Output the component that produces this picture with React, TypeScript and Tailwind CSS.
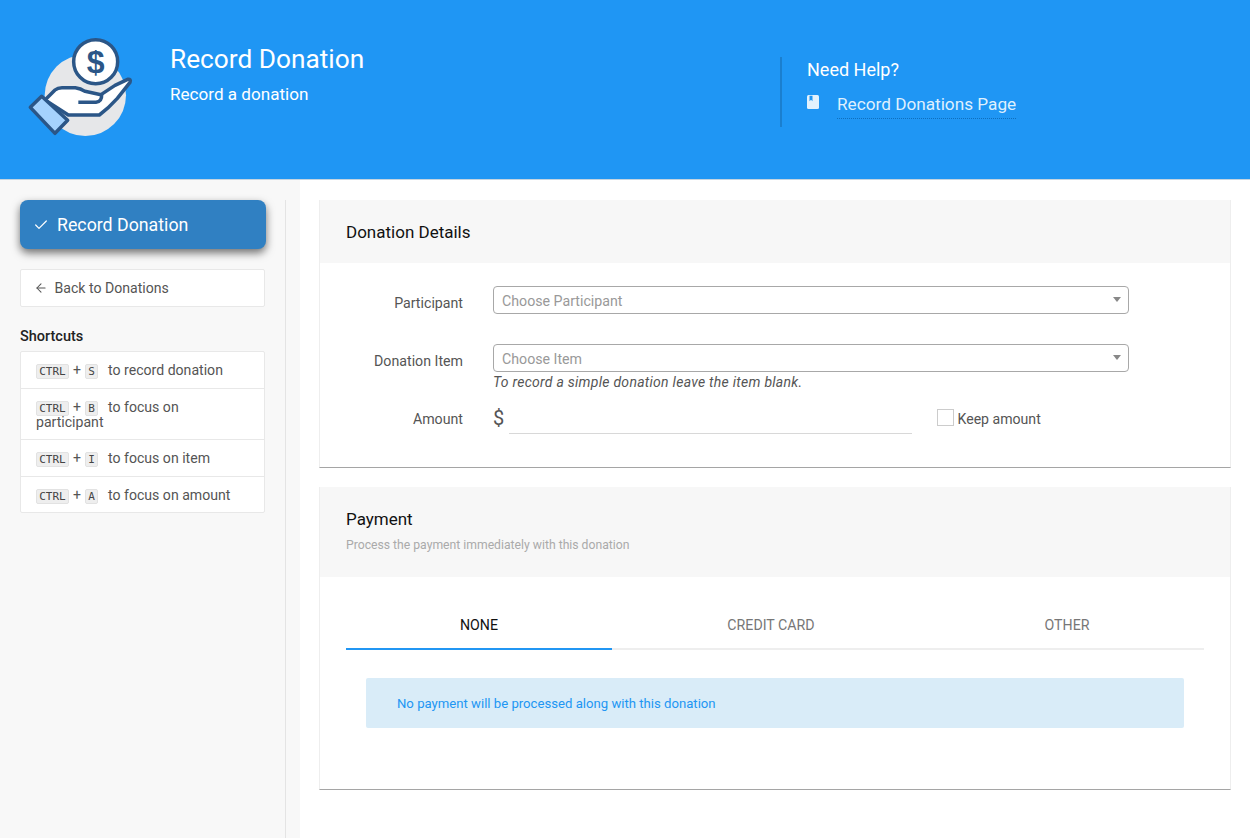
import React from "react";
import { ArrowLeft, Check } from "lucide-react";

function Logo() {
  return (
    <svg viewBox="0 0 480 390" className="w-[160px] h-[130px] mt-[20px] shrink-0">
      <circle cx="256" cy="226" r="122" fill="#e6e7e9" />
      <path d="M135 240 L165 210 Q173 203 186 203 L226 203 Q242 205 255 214 L303 224 L345 196 L383 178 Q394 177 390 187 L352 235 Q325 265 298 285 L205 285 Z" fill="#fff" stroke="#2b5687" strokeWidth="10.5" strokeLinejoin="round" />
      <path d="M235 247 L288 247 Q306 245 305 224" fill="none" stroke="#2b5687" strokeWidth="10.5" />
      <path d="M125 229 L203 301 L165 340 L91 262 Z" fill="#a5d2fd" stroke="#2b5687" strokeWidth="10.5" strokeLinejoin="round" />
      <circle cx="287" cy="125" r="66" fill="#fff" stroke="#2b5687" strokeWidth="10.5" />
      <text x="287" y="158" textAnchor="middle" fontFamily="Liberation Sans, sans-serif" fontWeight="700" fontSize="96" fill="#2b5687">$</text>
    </svg>
  );
}

function Key({ children, w }: { children: React.ReactNode; w: string }) {
  return (
    <kbd className={`inline-block ${w} h-[15px] leading-[14px] text-center bg-[#eeeeee] border border-[#e2e2e2] rounded-[2px] text-[11px] text-[#444] font-['DejaVu_Sans_Mono',monospace]`}>
      {children}
    </kbd>
  );
}

function Shortcut({ k, text, last, pb = "pb-[9px]" }: { k: string; text: React.ReactNode; last?: boolean; pb?: string }) {
  return (
    <div className={`px-[15px] pt-[11px] ${pb} text-[14.1px] leading-[15px] text-[#555] ${last ? "" : "border-b border-[#e8e8e8]"}`}>
      <Key w="w-[33px]">CTRL</Key>
      <span className="mx-[4px] text-[#555]">+</span>
      <Key w="w-[13px]">{k}</Key>
      <span className="ml-[10px]">{text}</span>
    </div>
  );
}

function Select({ text }: { text: string }) {
  return (
    <div className="h-[28px] w-[636px] border border-[#a8a8a8] rounded-[4px] bg-white flex items-center justify-between pl-[8px] pr-[6px] text-[14.2px] text-[#999]">
      <span className="mt-[3px]">{text}</span>
      <span className="w-0 h-0 border-l-[4px] border-r-[4px] border-t-[5px] border-l-transparent border-r-transparent border-t-[#888] mr-[1px] -mt-[2px]" />
    </div>
  );
}

export default function App() {
  return (
    <div className="w-[1250px] h-[838px] overflow-hidden bg-white font-['Roboto',sans-serif] flex flex-col">
      <header className="h-[180px] shrink-0 bg-[#1f96f4] border-b border-[#c4d4e0] flex text-white">
        <Logo />
        <div className="ml-[10px] pt-[42px] w-[610px]">
          <div className="text-[26.25px] leading-[34px]">Record Donation</div>
          <div className="text-[17.1px] leading-[20px] mt-[8px]">Record a donation</div>
        </div>
        <div className="mt-[57px] h-[70px] border-l-2 border-[#1a7fcf] pl-[25px]">
          <div className="text-[18px] leading-[24px] mt-[1px]">Need Help?</div>
          <div className="flex mt-[10px]">
            <svg viewBox="0 0 12 14" className="w-[12px] h-[14px] mt-[3px] mr-[18px]">
              <path d="M1.5 0H10.5Q12 0 12 1.5V12.5Q12 14 10.5 14H1.5Q0 14 0 12.5V1.5Q0 0 1.5 0Z" fill="#e3f2fd" />
              <path d="M2.5 0.8H5.5V6.2L4 4.8L2.5 6.2Z" fill="#1f96f4" />
            </svg>
            <span className="text-[17.2px] leading-[24px] pb-[2px] text-[#dff0fe] border-b border-dotted border-[#0f6fbd]">Record Donations Page</span>
          </div>
        </div>
      </header>
      <div className="flex flex-1 min-h-0">
        <aside className="w-[300px] shrink-0 bg-[#f8f8f8] pl-[20px] pr-[14px] pt-[20px]">
          <div className="h-full border-r border-[#e4e4e4] pr-[20px]">
            <div className="h-[49px] bg-[#3080c2] rounded-[8px] -mr-[1px] shadow-[0_4px_8px_rgba(0,0,0,0.55)] flex items-center pl-[13px] pt-[1px] text-white text-[17.75px]">
              <Check size={16} strokeWidth={1.8} className="mr-[8px]" />
              Record Donation
            </div>
            <div className="mt-[20px] h-[38px] bg-white border border-[#e8e8e8] rounded-[2px] flex items-center pl-[13px] pt-[1px] text-[14.1px] text-[#555]">
              <ArrowLeft size={14} strokeWidth={1.8} className="mr-[6.5px] -mt-[2px]" />
              Back to Donations
            </div>
            <div className="mt-[21px] text-[14.5px] leading-[18px] font-medium text-[#222]">Shortcuts</div>
            <div className="mt-[5px] bg-white border border-[#e8e8e8] rounded-[2px]">
              <Shortcut k="S" text="to record donation" />
              <Shortcut k="B" pb="pb-[8px]" text={<>to focus on<br /><span className="relative -top-[1px]">participant</span></>} />
              <Shortcut k="I" text="to focus on item" />
              <Shortcut k="A" pb="pb-[8px]" text="to focus on amount" last />
            </div>
          </div>
        </aside>
        <main className="flex-1 pl-[19px] pr-[19px] pt-[20px]">
          <section className="bg-white border-l border-r border-[#eeeeee] border-b border-b-[#a5a5a5] h-[268px]">
            <div className="h-[63px] bg-[#f7f7f7] pl-[26px] pt-[2px] flex items-center text-[17px] text-[#111]">Donation Details</div>
            <div className="flex items-start mt-[23px]">
              <label className="w-[144px] text-right text-[14.2px] text-[#555] mt-[7px] pr-[1px]">Participant</label>
              <div className="ml-[29px]"><Select text="Choose Participant" /></div>
            </div>
            <div className="flex items-start mt-[30px]">
              <label className="w-[144px] text-right text-[14.2px] text-[#555] mt-[7px] pr-[1px]">Donation Item</label>
              <div className="ml-[29px]">
                <Select text="Choose Item" />
                <div className="text-[14px] leading-[18px] tracking-[0.27px] pt-[1px] italic text-[#555]">To record a simple donation leave the item blank.</div>
              </div>
            </div>
            <div className="flex items-start mt-[4px]">
              <label className="w-[144px] text-right text-[14.2px] text-[#555] mt-[14px] pr-[1px]">Amount</label>
              <div className="ml-[29px] text-[20px] leading-[28px] text-[#555] w-[16px] mt-[9px]">$</div>
              <div className="w-[403px] h-[39px] border-b border-[#d8d8d8]" />
              <div className="ml-[25px] mt-[14px] w-[17px] h-[17px] border border-[#cccccc]" />
              <span className="ml-[3.5px] text-[14.1px] text-[#555] mt-[14px]">Keep amount</span>
            </div>
          </section>
          <section className="mt-[19px] bg-white border-l border-r border-[#eeeeee] border-b border-b-[#a5a5a5] h-[303px]">
            <div className="h-[90px] bg-[#f7f7f7] pl-[26px] pt-[21px]">
              <div className="text-[17px] leading-[22px] text-[#111]">Payment</div>
              <div className="text-[12.2px] leading-[16px] mt-[7px] text-[#aaa]">Process the payment immediately with this donation</div>
            </div>
            <div className="mx-[26px] mt-[25px] grid grid-cols-[266px_318px_274px] border-b-2 border-[#eeeeee] text-[14.2px] h-[48px]">
              <div className="h-[48px] border-b-2 border-[#2196f3] text-center pt-[13px] text-[#111]">NONE</div>
              <div className="text-center pt-[13px] text-[#777]">CREDIT CARD</div>
              <div className="text-center pt-[13px] text-[#777]">OTHER</div>
            </div>
            <div className="mx-[46px] mt-[28px] h-[50px] rounded-[2px] bg-[#d9ecf8] pl-[31px] pt-[1px] flex items-center text-[13.15px] text-[#2196f3]">No payment will be processed along with this donation</div>
          </section>
        </main>
      </div>
    </div>
  );
}
